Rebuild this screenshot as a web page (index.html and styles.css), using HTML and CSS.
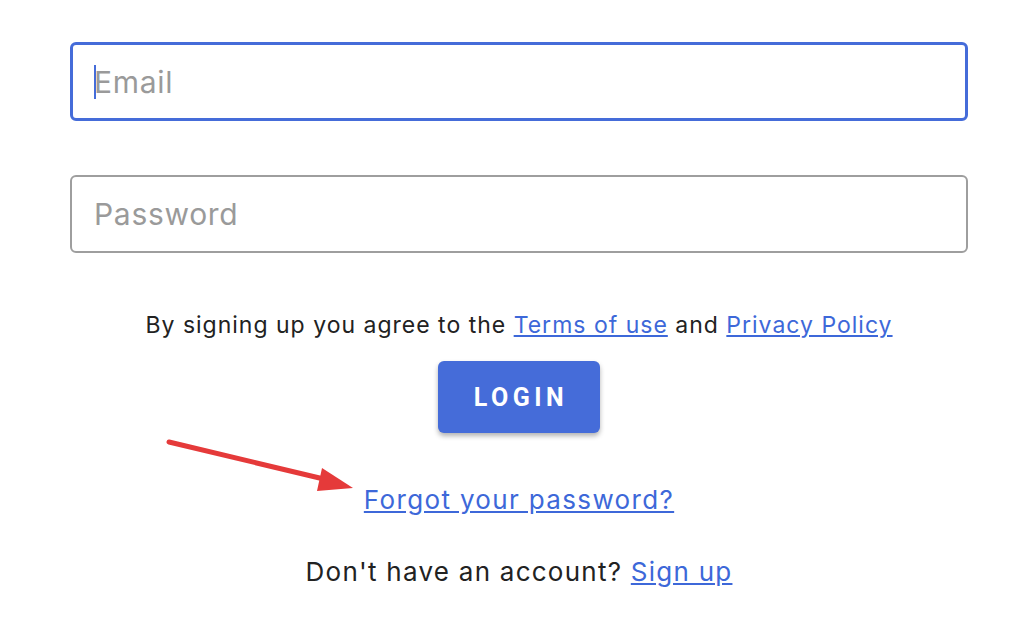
FILE: index.html
```html
<!DOCTYPE html>
<html>
<head>
<meta charset="utf-8">
<link rel="stylesheet" href="styles.css">
</head>
<body>
<div class="form">
  <div class="field focused"><span class="caret"></span><span class="placeholder">Email</span></div>
  <div class="field"><span class="placeholder">Password</span></div>
  <p class="terms">By signing up you agree to the <a href="#">Terms of use</a> and <a href="#">Privacy Policy</a></p>
  <button class="login">LOGIN</button>
  <a href="#" class="forgot">Forgot your password?</a>
  <p class="signup">Don't have an account? <a href="#">Sign up</a></p>
  <svg class="arrow" width="200" height="60" viewBox="0 0 200 60">
    <line x1="3" y1="4" x2="162" y2="42" stroke="#e53a3a" stroke-width="5" stroke-linecap="round"/>
    <polygon points="187,50 156,30 151,53" fill="#e53a3a"/>
  </svg>
</div>
</body>
</html>
```
FILE: styles.css
```css
body {
  margin: 0;
  background: #fff;
  font-family: "Inter", "Liberation Sans", sans-serif;
  color: #222;
  letter-spacing: 1px;
}
.form {
  position: relative;
  margin-left: 70px;
  width: 898px;
  padding-top: 42px;
  display: flex;
  flex-direction: column;
  align-items: center;
}
.field {
  box-sizing: border-box;
  width: 100%;
  height: 78px;
  border: 2px solid #9e9e9e;
  border-radius: 6px;
  display: flex;
  align-items: center;
  padding-left: 22px;
}
.field.focused {
  border: 3px solid #456cd9;
  height: 79px;
  padding-left: 21px;
  margin-bottom: 54px;
}
.placeholder {
  font-size: 30px;
  letter-spacing: 0.7px;
  color: #9a9a9a;
}
.caret {
  display: inline-block;
  width: 2px;
  height: 34px;
  background: #456cd9;
  margin-right: -2px;
}
.terms {
  margin: 54px 0 0;
  font-size: 23px;
  line-height: 36px;
}
a {
  color: #3d68d9;
}
.login {
  margin-top: 18px;
  width: 162px;
  height: 72px;
  padding: 0 0 0 4px;
  background: #456cd9;
  border: none;
  border-radius: 6px;
  color: #fff;
  font-family: "Roboto", sans-serif;
  font-weight: 700;
  font-size: 25px;
  letter-spacing: 4.5px;
  box-shadow: 0 3px 5px rgba(0,0,0,0.3);
}
.forgot {
  margin-top: 49px;
  font-size: 26px;
  line-height: 36px;
  letter-spacing: 1.35px;
}
.arrow {
  position: absolute;
  left: 96px;
  top: 438px;
}
.signup {
  margin: 36px 0 0;
  font-size: 26px;
  line-height: 36px;
  letter-spacing: 1.25px;
}
```
